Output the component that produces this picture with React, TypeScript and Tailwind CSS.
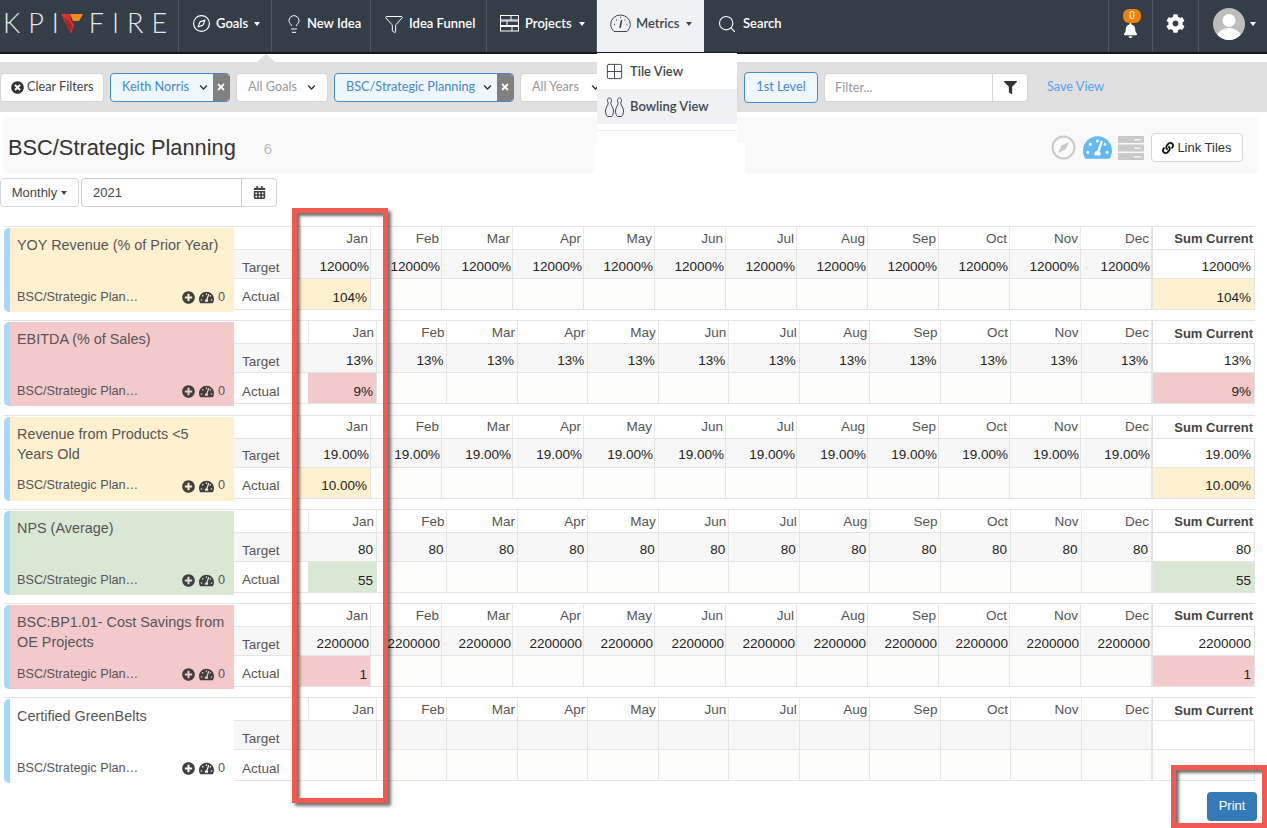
import type { ReactNode } from 'react';
import { Compass, Lightbulb, Funnel, Search, Grid2x2 } from 'lucide-react';
import {
  FaBell, FaCalendarAlt, FaChevronDown, FaCog, FaFilter, FaLink,
  FaPlusCircle, FaTachometerAlt, FaTimes, FaTimesCircle,
} from 'react-icons/fa';

const MONTHS = ['Jan', 'Feb', 'Mar', 'Apr', 'May', 'Jun', 'Jul', 'Aug', 'Sep', 'Oct', 'Nov', 'Dec'];

type Tone = 'yellow' | 'red' | 'green' | 'none';

const cardBg: Record<Tone, string> = {
  yellow: 'bg-[#fff0cf]',
  red: 'bg-[#f3c9c9]',
  green: 'bg-[#d9e8d3]',
  none: 'bg-white',
};

const metrics: {
  title: string[];
  tone: Tone;
  target: string;
  actual: string;
  wide: boolean;
}[] = [
  { title: ['YOY Revenue (% of Prior Year)'], tone: 'yellow', target: '12000%', actual: '104%', wide: true },
  { title: ['EBITDA (% of Sales)'], tone: 'red', target: '13%', actual: '9%', wide: false },
  { title: ['Revenue from Products <5', 'Years Old'], tone: 'yellow', target: '19.00%', actual: '10.00%', wide: true },
  { title: ['NPS (Average)'], tone: 'green', target: '80', actual: '55', wide: false },
  { title: ['BSC:BP1.01- Cost Savings from', 'OE Projects'], tone: 'red', target: '2200000', actual: '1', wide: true },
  { title: ['Certified GreenBelts'], tone: 'none', target: '', actual: '', wide: false },
];

/* ── drawn icons ── */
const GaugeOutline = () => (
  <svg width="21" height="19" viewBox="0 0 21 19" fill="none" stroke="#3d4750" strokeWidth="1">
    <path d="M4 17.5h13c1.6-1.6 3.3-4 3.3-7.2a9.8 9.3 0 0 0-19.6 0c0 3.2 1.7 5.6 3.3 7.2z" />
    <path d="M10 14l1.6-8" strokeWidth="1.6" />
    <path d="M4 10.5h.8M6 6h.8M14.5 6h.8M16.5 10.5h.8M10.2 3.5h.8" strokeWidth="1.4" />
  </svg>
);

const ProjectsIcon = () => (
  <svg width="19" height="17" viewBox="0 0 19 17" fill="none" stroke="#fff" strokeWidth="1">
    <rect x="0.5" y="0.5" width="18" height="4.5" />
    <rect x="0.5" y="6" width="18" height="4.5" />
    <rect x="0.5" y="11.5" width="18" height="4.5" />
    <path d="M11 .5V5M7 6v4.5M12 11.5V16" />
  </svg>
);

const BowlingPins = () => (
  <svg width="19" height="20" viewBox="0 0 19 20" fill="none" stroke="#3d4750" strokeWidth="1">
    <path d="M4.500 1c-1.400 0-2 1-2 2.300 0 1.200.7 2 .7 3.200 0 1.500-2.700 4-2.700 7.500 0 2.500 1 5 2 5.500h4c1-.5 2-3 2-5.500 0-3.500-2.700-6-2.700-7.500 0-1.200.7-2 .7-3.200C6.500 2 5.900 1 4.500 1z" />
    <path d="M14.500 1c-1.400 0-2 1-2 2.300 0 1.200.7 2 .7 3.200 0 1.500-2.700 4-2.700 7.500 0 2.500 1 5 2 5.500h4c1-.5 2-3 2-5.500 0-3.500-2.700-6-2.700-7.500 0-1.200.7-2 .7-3.200 0-1.300-.6-2.300-2-2.300z" />
  </svg>
);

const Flame = () => (
  <svg width="23" height="20" viewBox="0 0 23 20">
    <path d="M0 0h9l1 6 3 5-3 9z" fill="#d9302c" />
    <path d="M9 0h13l-4 7h-6z" fill="#f28a1c" />
    <path d="M3 4l5 3 3 5-2 6z" fill="#a9261f" />
  </svg>
);

const CompassThin = () => (
  <svg width="25" height="25" viewBox="0 0 25 25" fill="none">
    <circle cx="12.5" cy="12.5" r="11" stroke="#c9c9c9" strokeWidth="2" />
    <path d="M18 7l-3.5 7.5L7 18l3.5-7.500z" fill="#c9c9c9" />
  </svg>
);

const ServerBars = () => (
  <svg width="26" height="24" viewBox="0 0 26 24">
    {[0, 8.5, 17].map((y) => (
      <g key={y}>
        <rect x="0" y={y} width="26" height="7" fill="#c9c9c9" />
        <rect x="16" y={y + 3} width="7" height="1.5" fill="#f5f5f5" />
      </g>
    ))}
  </svg>
);

const Caret = ({ className = 'border-t-white' }: { className?: string }) => (
  <span className={`inline-block w-0 h-0 border-x-[3.5px] border-x-transparent border-t-[4px] ${className}`} />
);

const NavItem = ({
  width, pad, gap = 'gap-[5px]', icon, label, caret, active,
}: {
  width: string;
  pad: string;
  gap?: string;
  icon: ReactNode;
  label: string;
  caret?: boolean;
  active?: boolean;
}) => (
  <div className={`${width} ${pad} ${gap} pb-[5px] flex items-center shrink-0 ${active ? 'bg-[#f0f1f4] text-[#3d4750]' : 'border-r border-[#4d5862] text-white'}`}>
    {icon}
    <span className="font-['Lato',sans-serif] text-[13px] font-semibold whitespace-nowrap">{label}</span>
    {caret && <Caret className={`ml-[1px] ${active ? 'border-t-[#3d4750]' : 'border-t-white'}`} />}
  </div>
);

const Select = ({
  width, label, active, onClear,
}: {
  width: string;
  label: string;
  active?: boolean;
  onClear?: boolean;
}) => (
  <div className={`${width} h-[29px] flex items-center rounded-[4px] border shrink-0 overflow-hidden ${active ? 'border-[#428bca] bg-[#eef6fe] text-[#428bca]' : 'border-[#d5d5d5] bg-white text-[#999]'}`}>
    <span className="pl-[11px] flex-1 whitespace-nowrap">{label}</span>
    <FaChevronDown size={9} className={`text-[#333] ${onClear ? 'mr-[5px]' : 'mr-[11px]'}`} />
    {onClear && (
      <span className="w-[16px] h-full bg-[#808080] flex items-center justify-center text-white">
        <FaTimes size={10} />
      </span>
    )}
  </div>
);

const MetricRow = ({ m }: { m: (typeof metrics)[number] }) => {
  const template = m.wide
    ? 'grid-cols-[66px_71px_repeat(11,minmax(0,1fr))_103px]'
    : 'grid-cols-[74px_69px_repeat(11,minmax(0,1fr))_103px]';
  const targetPad = m.wide ? 'pr-[1px]' : 'pr-[3px]';
  const actualTone = m.tone === 'none' ? 'bg-[#fdfdfb]' : cardBg[m.tone];

  return (
    <div className="flex h-[84px] mb-[10.25px] ml-[4px] w-[1251px] border-t border-[#e4e4e4]">
      {/* Title card */}
      <div className={`w-[230px] h-[84px] mt-[1px] shrink-0 flex flex-col rounded-l-[5px] border-l-[6px] border-[#a5d8fb] pl-[7px] pr-[9px] text-[#555] ${cardBg[m.tone]}`}>
        <div className="pt-[7px] text-[14.4px] leading-[20px] whitespace-nowrap flex-1">
          {m.title.map((t) => <div key={t}>{t}</div>)}
        </div>
        <div className="h-[28px] pb-[1px] flex items-center text-[12.7px] text-[#555]">
          <span className="flex-1">BSC/Strategic Plan…</span>
          <FaPlusCircle size={13} className="text-[#3f3f3f] mr-[4px]" />
          <FaTachometerAlt size={15} className="text-[#3f3f3f] mr-[4px]" />
          <span>0</span>
        </div>
      </div>

      {/* Values */}
      <div className={`flex-1 grid ${template} grid-rows-[22px_30px_31px] text-[13.5px]`}>
        <div />
        {MONTHS.map((mo, i) => (
          <div key={mo} className={`flex items-center justify-end pt-[2px] pr-[2px] text-[#555] border-r border-[#e8e8e8] ${i === 0 ? 'border-l' : ''}`}>
            {mo}
          </div>
        ))}
        <div className="flex items-center justify-end pt-[2px] pr-[2px] text-[13px] font-bold text-[#444] border-l border-[#e0e0e0]">
          Sum Current
        </div>

        <div className="flex items-end pl-[8px] bg-[#f7f7f7] border-y border-[#e4e4e4] text-[#555]">Target</div>
        {MONTHS.map((mo) => (
          <div key={mo} className={`flex items-center justify-end pt-[6px] ${targetPad} bg-[#f7f7f7] border-y border-r border-[#e4e4e4] text-[#222] whitespace-nowrap`}>
            {m.target}
          </div>
        ))}
        <div className="flex items-center justify-end pt-[6px] pr-[3px] bg-white border-y border-l border-r border-[#e4e4e4] text-[#222]">
          {m.target}
        </div>

        <div className="flex items-center pt-[7px] pl-[8px] bg-white border-b border-[#e4e4e4] text-[#555]">Actual</div>
        {MONTHS.map((mo, i) => (
          <div key={mo} className={`flex items-end pb-[1px] justify-end pr-[3px] border-b border-r border-[#e4e4e4] text-[#222] ${i === 0 ? actualTone : 'bg-[#fdfdfb]'}`}>
            {i === 0 ? m.actual : ''}
          </div>
        ))}
        <div className={`flex items-end pb-[1px] justify-end pr-[3px] border-b border-l border-r border-[#e4e4e4] text-[#222] ${actualTone}`}>
          {m.actual}
        </div>
      </div>
    </div>
  );
};

const Callout = ({ className }: { className: string }) => (
  <div className={`absolute border-[5px] border-[#f05a50] pointer-events-none shadow-[3px_3px_3px_rgba(0,0,0,0.55),inset_3px_3px_3px_rgba(0,0,0,0.55)] ${className}`} />
);

export default function App() {
  return (
    <div className="relative w-[1267px] h-[828px] overflow-hidden bg-white font-['Liberation_Sans',Arial,sans-serif] text-[#333]">
      {/* Top nav */}
      <header className="flex h-[54px] bg-[#333e48] border-b-2 border-[#15191d]">
        <div className="w-[179px] shrink-0 flex items-center pl-[3px] pb-[5px] border-r border-[#4d5862] text-[#e8e8e8] font-['Lato',sans-serif] font-light text-[27px] tracking-[8px]">
          <span>KPI</span>
          <span className="-ml-[6px] mr-[5px]"><Flame /></span>
          <span>FIRE</span>
        </div>
        <NavItem width="w-[93px]" pad="pl-[13px]" icon={<Compass size={19} strokeWidth={1.5} />} label="Goals" caret />
        <NavItem width="w-[99px]" pad="pl-[12px]" gap="gap-[3px]" icon={<Lightbulb size={20} strokeWidth={1.2} />} label="New Idea" />
        <NavItem width="w-[116px]" pad="pl-[13px]" icon={<Funnel size={20} strokeWidth={1.2} />} label="Idea Funnel" />
        <NavItem width="w-[110px]" pad="pl-[13px]" gap="gap-[6px]" icon={<ProjectsIcon />} label="Projects" caret />
        <NavItem width="w-[107px]" pad="pl-[13px]" icon={<GaugeOutline />} label="Metrics" caret active />
        <div className="flex-1 flex items-center gap-[6px] pl-[13px] pb-[5px] text-white">
          <Search size={20} strokeWidth={1.3} />
          <span className="font-['Lato',sans-serif] text-[13px] font-semibold">Search</span>
        </div>
        <div className="relative w-[44px] shrink-0 border-l border-[#4d5862] flex items-center justify-center pb-[5px]">
          <FaBell size={15} className="text-white mt-[13px]" />
          <span className="absolute left-[14px] top-[9px] w-[18px] h-[14px] rounded-[6px] bg-[#ee8208] text-white text-[10px] leading-[14px] text-center">0</span>
        </div>
        <div className="w-[46px] shrink-0 border-l border-[#4d5862] flex items-center justify-center pb-[5px]">
          <FaCog size={19} className="text-white" />
        </div>
        <div className="w-[69px] shrink-0 border-l border-[#4d5862] flex items-center pl-[14px] gap-[5px] pb-[5px]">
          <svg width="32" height="32" viewBox="0 0 32 32">
            <clipPath id="avatar"><circle cx="16" cy="16" r="16" /></clipPath>
            <g clipPath="url(#avatar)">
              <rect width="32" height="32" fill="#bdbdbd" />
              <circle cx="16" cy="12.5" r="6.5" fill="#fff" />
              <ellipse cx="16" cy="29" rx="12" ry="9" fill="#fff" />
            </g>
          </svg>
          <Caret />
        </div>
      </header>

      {/* Filter bar */}
      <div className="mt-[8px] h-[50px] bg-[#e0e0e0] flex items-center gap-[6px] font-['Lato',sans-serif] text-[12.7px]">
        <div className="w-[104px] h-[29px] shrink-0 flex items-center gap-[3px] pl-[10px] rounded-[4px] border border-[#d5d5d5] bg-white text-[#444]">
          <FaTimesCircle size={13} className="text-[#333]" />
          Clear Filters
        </div>
        <Select width="w-[120px]" label="Keith Norris" active onClear />
        <Select width="w-[92px]" label="All Goals" />
        <Select width="w-[180px]" label="BSC/Strategic Planning" active onClear />
        <Select width="w-[92px]" label="All Years" />
        <div className="w-[120px] h-[29px] shrink-0 rounded-[4px] border border-[#d5d5d5] bg-white" />
        <div className="w-[74px] h-[31px] shrink-0 flex items-center justify-center rounded-[4px] border border-[#428bca] bg-[#eef6fe] text-[#428bca]">
          1st Level
        </div>
        <div className="w-[204px] h-[29px] shrink-0 flex rounded-[4px] border border-[#d5d5d5] bg-white text-[#999]">
          <span className="flex-1 pl-[10px] leading-[27px]">Filter...</span>
          <span className="w-[35px] border-l border-[#d5d5d5] flex items-center justify-center text-[#333]">
            <FaFilter size={13} />
          </span>
        </div>
        <span className="ml-[13px] text-[#4da3f0]">Save View</span>
      </div>

      {/* Title */}
      <div className="mt-[5px] ml-[3px] w-[1255px] h-[56px] bg-[#f9f9f9] rounded-[3px] flex items-center pl-[5px] pr-[15px] pt-[5px]">
        <h1 className="text-[21.8px] text-[#333] font-normal leading-none">BSC/Strategic Planning</h1>
        <span className="ml-[28px] mt-[4px] text-[15px] text-[#bbb]">6</span>
        <div className="ml-auto flex items-center">
          <CompassThin />
          <span className="ml-[7px] text-[#62b9f5]"><FaTachometerAlt size={29} /></span>
          <span className="ml-[6px]"><ServerBars /></span>
          <div className="ml-[7px] w-[92px] h-[29px] flex items-center justify-center gap-[3px] rounded-[4px] border border-[#d5d5d5] bg-white text-[13px] text-[#333]">
            <FaLink size={12} className="text-[#111]" />
            Link Tiles
          </div>
        </div>
      </div>

      {/* Period */}
      <div className="mt-[5px] flex items-center h-[29px] text-[13px] text-[#444]">
        <div className="w-[79px] h-full flex items-center justify-center gap-[4px] rounded-[4px] border border-[#d5d5d5]">
          Monthly <Caret className="border-t-[#444]" />
        </div>
        <div className="ml-[2px] w-[161px] h-full pl-[11px] leading-[27px] rounded-l-[4px] border border-[#ccc]">2021</div>
        <div className="w-[35px] h-full flex items-center justify-center rounded-r-[4px] border border-l-0 border-[#d5d5d5]">
          <FaCalendarAlt size={13} className="text-[#444]" />
        </div>
      </div>

      {/* Metric rows */}
      <div className="mt-[19px]">
        {metrics.map((m) => <MetricRow key={m.title[0]} m={m} />)}
      </div>

      <div className="flex justify-end pr-[10px]">
        <button className="w-[50px] h-[29px] rounded-[4px] bg-[#337ab7] text-white text-[13px]">Print</button>
      </div>

      {/* Notch under Goals */}
      <svg className="absolute left-[257px] top-[54px]" width="18" height="8" viewBox="0 0 18 8">
        <path d="M0 8L9 0l9 8z" fill="#e0e0e0" />
      </svg>

      {/* Metrics dropdown */}
      <div className="absolute left-[594px] top-[143px] w-[151px] h-[30px] bg-white" />
      <div className="absolute left-[597px] top-[53px] w-[140px] h-[90px] pt-[1px] bg-white text-[#3d4750] font-['Lato',sans-serif] text-[13px] font-semibold">
        <div className="h-[35px] flex items-center gap-[6px] pl-[8px]">
          <Grid2x2 size={19} strokeWidth={1.2} />
          Tile View
        </div>
        <div className="h-[35px] flex items-center gap-[6px] pl-[8px] bg-[#f0f1f4]">
          <BowlingPins />
          Bowling View
        </div>
        <div className="mt-[6px] border-t border-[#eeeeee]" />
      </div>

      {/* Annotations */}
      <Callout className="left-[292px] top-[208px] w-[96px] h-[595px]" />
      <Callout className="left-[1171px] top-[765px] w-[96px] h-[63px]" />
    </div>
  );
}
